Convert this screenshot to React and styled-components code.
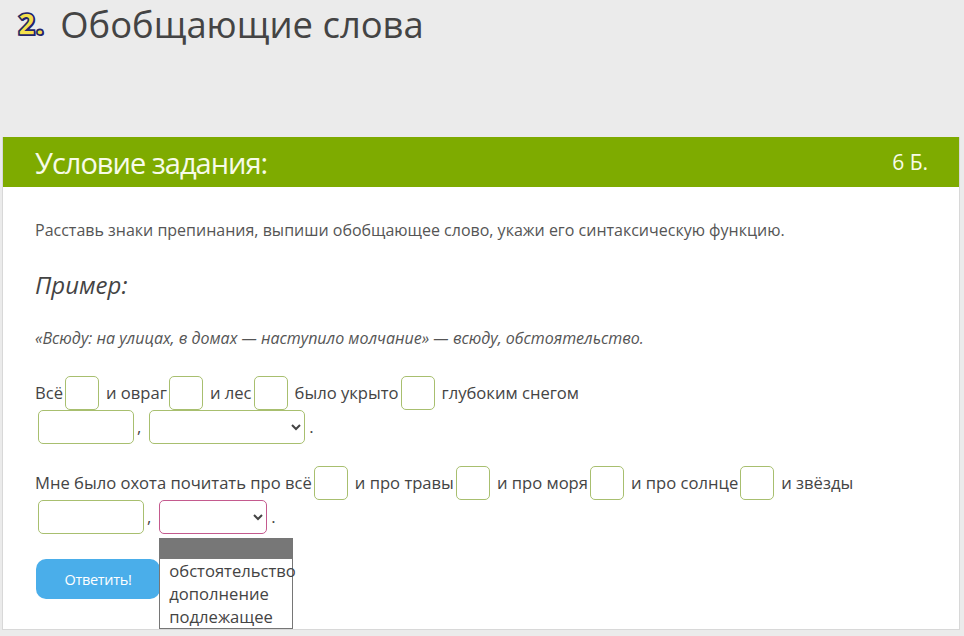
import { createGlobalStyle, styled } from "styled-components"

const GlobalStyle = createGlobalStyle`
  html, body {
    margin: 0;
    padding: 0;
    background: #ebebeb;
    font-family: "Open Sans", "Liberation Sans", sans-serif;
    color: #444;
  }
`

const Page = styled.main`
  padding: 0 4px 0 2px;
`

const Title = styled.h1`
  margin: 0;
  height: 137px;
  padding: 0 0 0 16px;
  display: flex;
  align-items: flex-start;
  gap: 16px;
  font-weight: 400;
  font-size: 36.4px;
  line-height: 48px;
  color: #444;
`

const Num = styled.span`
  font-size: 30px;
  font-weight: 800;
  color: #f4e04c;
  -webkit-text-stroke: 1.6px #24246a;
  text-shadow: 1px 1px 0 #24246a;
  line-height: 48px;
`

const Card = styled.section`
  background: #fff;
  border: 1px solid #d8d8d8;
  border-top: 0;
`

const CardHead = styled.header`
  height: 50px;
  background: #7eab00;
  color: #f7fbe8;
  display: flex;
  align-items: center;
  justify-content: space-between;
  padding: 0 31px 0 32px;
  font-size: 29px;
  letter-spacing: -1px;
`

const Points = styled.span`
  font-size: 21px;
  letter-spacing: 0;
`

const CardBody = styled.div`
  padding: 31px 32px 30px 32px;
  position: relative;
`

const Task = styled.p`
  margin: 0 0 27px;
  font-size: 16px;
  line-height: 24px;
  color: #555;
`

const Subtitle = styled.h3`
  margin: 0 0 25px;
  font-size: 24px;
  font-style: italic;
  font-weight: 400;
  line-height: 32px;
  color: #444;
`

const Example = styled.p`
  margin: 0 0 26px;
  font-size: 16px;
  font-style: italic;
  line-height: 24px;
  color: #555;
`

const Sentence = styled.div`
  margin: 0 0 22px;
  font-size: 16.6px;
  line-height: 34px;
  color: #444;
`

const Box = styled.input`
  box-sizing: border-box;
  display: inline-block;
  vertical-align: top;
  width: ${(p) => p.$w || 34}px;
  height: 34px;
  margin: 0 ${(p) => p.$mr ?? 7}px 0 ${(p) => p.$ml ?? 2}px;
  border: 1px solid #a8bf6f;
  border-radius: 5px;
  background: #fff;
  font: inherit;
  padding: 0 6px;
  outline: none;
`

const Pick = styled.select`
  box-sizing: border-box;
  vertical-align: top;
  width: ${(p) => p.$w}px;
  height: 34px;
  margin: 0 4px 0 ${(p) => (p.$inWrap ? 0 : 8)}px;
  border: 1px solid ${(p) => (p.$active ? "#c45a8e" : "#a8bf6f")};
  border-radius: 5px;
  background: #fff;
  font: inherit;
  color: #444;
  outline: none;
`

const PickWrap = styled.span`
  position: relative;
  display: inline-block;
  vertical-align: top;
  margin-left: 8px;
  line-height: 0;
`

const Menu = styled.div`
  position: absolute;
  top: 38px;
  left: 0;
  width: 134px;
  box-sizing: border-box;
  border: 1px solid #767676;
  background: #fff;
  z-index: 2;
  line-height: 23px;
  font-size: 16.6px;
  color: #444;
`

const MenuBlank = styled.div`
  height: 20px;
  background: #777;
`

const MenuItem = styled.div`
  padding: 0 0 0 9px;
  white-space: nowrap;
`

const Submit = styled.button`
  display: block;
  width: 124px;
  height: 40px;
  margin: 25px 0 0 1px;
  border: 0;
  border-radius: 10px;
  background: #4aaeea;
  color: #fff;
  font-family: "Open Sans", sans-serif;
  font-size: 14.5px;
  letter-spacing: -0.3px;
`

const roles = ["обстоятельство", "дополнение", "подлежащее"]

export default function App() {
  return (
    <Page>
      <GlobalStyle />
      <Title>
        <Num>2.</Num>
        <span>Обобщающие слова</span>
      </Title>
      <Card>
        <CardHead>
          <span>Условие задания:</span>
          <Points>6 Б.</Points>
        </CardHead>
        <CardBody>
          <Task>Расставь знаки препинания, выпиши обобщающее слово, укажи его синтаксическую функцию.</Task>
          <Subtitle>Пример:</Subtitle>
          <Example>«Всюду: на улицах, в домах — наступило молчание» — всюду, обстоятельство.</Example>
          <Sentence>
            Всё<Box />и овраг<Box />и лес<Box />было укрыто<Box />глубоким снегом
            <br />
            <Box $w={96} $ml={3} $mr={3} />,<Pick $w={156} defaultValue="">
              <option value=""></option>
              {roles.map((r) => <option key={r}>{r}</option>)}
            </Pick>.
          </Sentence>
          <Sentence>
            Мне было охота почитать про всё<Box />и про травы<Box />и про моря<Box />и про солнце<Box />и звёзды
            <br />
            <Box $w={106} $ml={3} $mr={3} />,<PickWrap>
              <Pick $w={108} $active $inWrap defaultValue="">
                <option value=""></option>
                {roles.map((r) => <option key={r}>{r}</option>)}
              </Pick>
              <Menu>
                <MenuBlank />
                {roles.map((r) => <MenuItem key={r}>{r}</MenuItem>)}
              </Menu>
            </PickWrap>.
          </Sentence>
          <Submit>Ответить!</Submit>
        </CardBody>
      </Card>
    </Page>
  )
}
